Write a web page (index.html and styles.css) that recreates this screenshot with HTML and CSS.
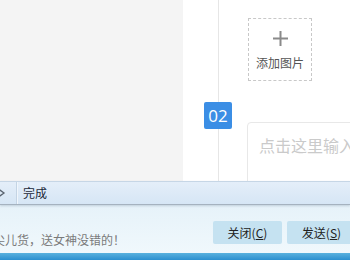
FILE: index.html
```html
<!DOCTYPE html>
<html lang="zh">
<head>
<meta charset="utf-8">
<link rel="stylesheet" href="styles.css">
</head>
<body>
<div class="page">
  <div class="main">
    <div class="left"></div>
    <div class="right">
      <div class="rail">
        <div class="badge">02</div>
      </div>
      <div class="content">
        <div class="add-img">
          <svg class="plus" width="15" height="15" viewBox="0 0 15 15"><path d="M7.5 0V15M0 7.5H15" stroke="#8a8a8a" stroke-width="2"/></svg>
          <span class="add-label">添加图片</span>
        </div>
        <div class="input-box"><span class="placeholder">点击这里输入</span></div>
      </div>
    </div>
  </div>
  <div class="toolbar">
    <div class="tb-arrow">
      <svg width="14" height="20" viewBox="0 0 14 20"><polyline points="-3,5 4,10 -3,15" fill="none" stroke="#5a6470" stroke-width="1.3"/></svg>
    </div>
    <div class="tb-sep"></div>
    <span class="tb-done">完成</span>
  </div>
  <div class="footer">
    <span class="msg">尖儿货，送女神没错的！</span>
    <div class="buttons">
      <div class="btn">关闭(<u>C</u>)</div>
      <div class="btn btn-send">发送(<u>S</u>)</div>
    </div>
  </div>
  <div class="bottom-bar"></div>
</div>
</body>
</html>
```
FILE: styles.css
```css
html, body {
  margin: 0;
  padding: 0;
}
body {
  width: 350px;
  height: 260px;
  overflow: hidden;
  font-family: "Noto Sans CJK SC", "Noto Sans", sans-serif;
}
.page {
  display: flex;
  flex-direction: column;
  width: 350px;
  height: 260px;
}
.main {
  display: flex;
  height: 181px;
  flex: none;
  overflow: hidden;
}
.left {
  width: 183px;
  flex: none;
  background: #f4f4f4;
}
.right {
  flex: 1;
  min-width: 0;
  overflow: hidden;
  display: flex;
  background: #ffffff;
}
.rail {
  width: 64px;
  flex: none;
  background: linear-gradient(to right, transparent 35px, #e6e6e6 35px, #e6e6e6 36px, transparent 36px);
}
.badge {
  margin: 102px 0 0 21px;
  width: 28px;
  height: 27px;
  background: #3b8ee5;
  border-radius: 2px;
  color: #ffffff;
  font-family: "Open Sans", "Noto Sans", sans-serif;
  font-size: 17px;
  line-height: 27px;
  text-align: center;
}
.content {
  flex: 1;
  display: flex;
  flex-direction: column;
  min-width: 0;
}
.add-img {
  flex: none;
  margin: 18px 0 0 1px;
  width: 64px;
  height: 63px;
  box-sizing: border-box;
  border: 1px dashed #c8c8c8;
  display: flex;
  flex-direction: column;
  align-items: center;
}
.plus {
  margin-top: 12px;
}
.add-label {
  margin-top: 10px;
  font-size: 12px;
  line-height: 14px;
  color: #555555;
  white-space: nowrap;
}
.input-box {
  margin-top: 41px;
  width: 200px;
  height: 90px;
  flex: none;
  box-sizing: border-box;
  border: 1px solid #e8e8e8;
  border-radius: 4px;
  padding: 10px 0 0 11px;
}
.placeholder {
  font-size: 16px;
  line-height: 20px;
  color: #cacaca;
  white-space: nowrap;
}
.toolbar {
  height: 22px;
  flex: none;
  display: flex;
  align-items: center;
  background: linear-gradient(#e4eef9, #d6e6f5);
  border-top: 1px solid #c6d6e6;
  border-bottom: 1px solid #a5b2bf;
  box-shadow: 0 1px 2px rgba(120, 140, 160, 0.35);
  position: relative;
}
.tb-arrow {
  width: 16px;
  height: 22px;
  display: flex;
  align-items: center;
}
.tb-sep {
  width: 1px;
  height: 22px;
  background: #c4d4e4;
  box-shadow: 1px 0 0 #f0f6fc;
}
.tb-done {
  margin-left: 6px;
  margin-top: -2px;
  font-size: 12px;
  color: #1c2838;
}
.footer {
  flex: 1;
  display: flex;
  align-items: center;
  justify-content: space-between;
  background: linear-gradient(#e6f2f9, #f0f8fc);
}
.msg {
  margin-left: -7px;
  margin-top: 21px;
  font-size: 12px;
  color: #7a7a7a;
  white-space: nowrap;
}
.buttons {
  display: flex;
  gap: 5px;
  margin-top: 6px;
  margin-right: -6px;
}
.btn {
  width: 69px;
  height: 23px;
  line-height: 23px;
  text-align: center;
  background: #c5e2f1;
  border-radius: 2px;
  font-size: 12px;
  color: #222222;
}
.btn u {
  text-underline-offset: 1px;
}
.bottom-bar {
  height: 7px;
  flex: none;
  background: linear-gradient(#59b1de, #2c8fcf);
}
```
